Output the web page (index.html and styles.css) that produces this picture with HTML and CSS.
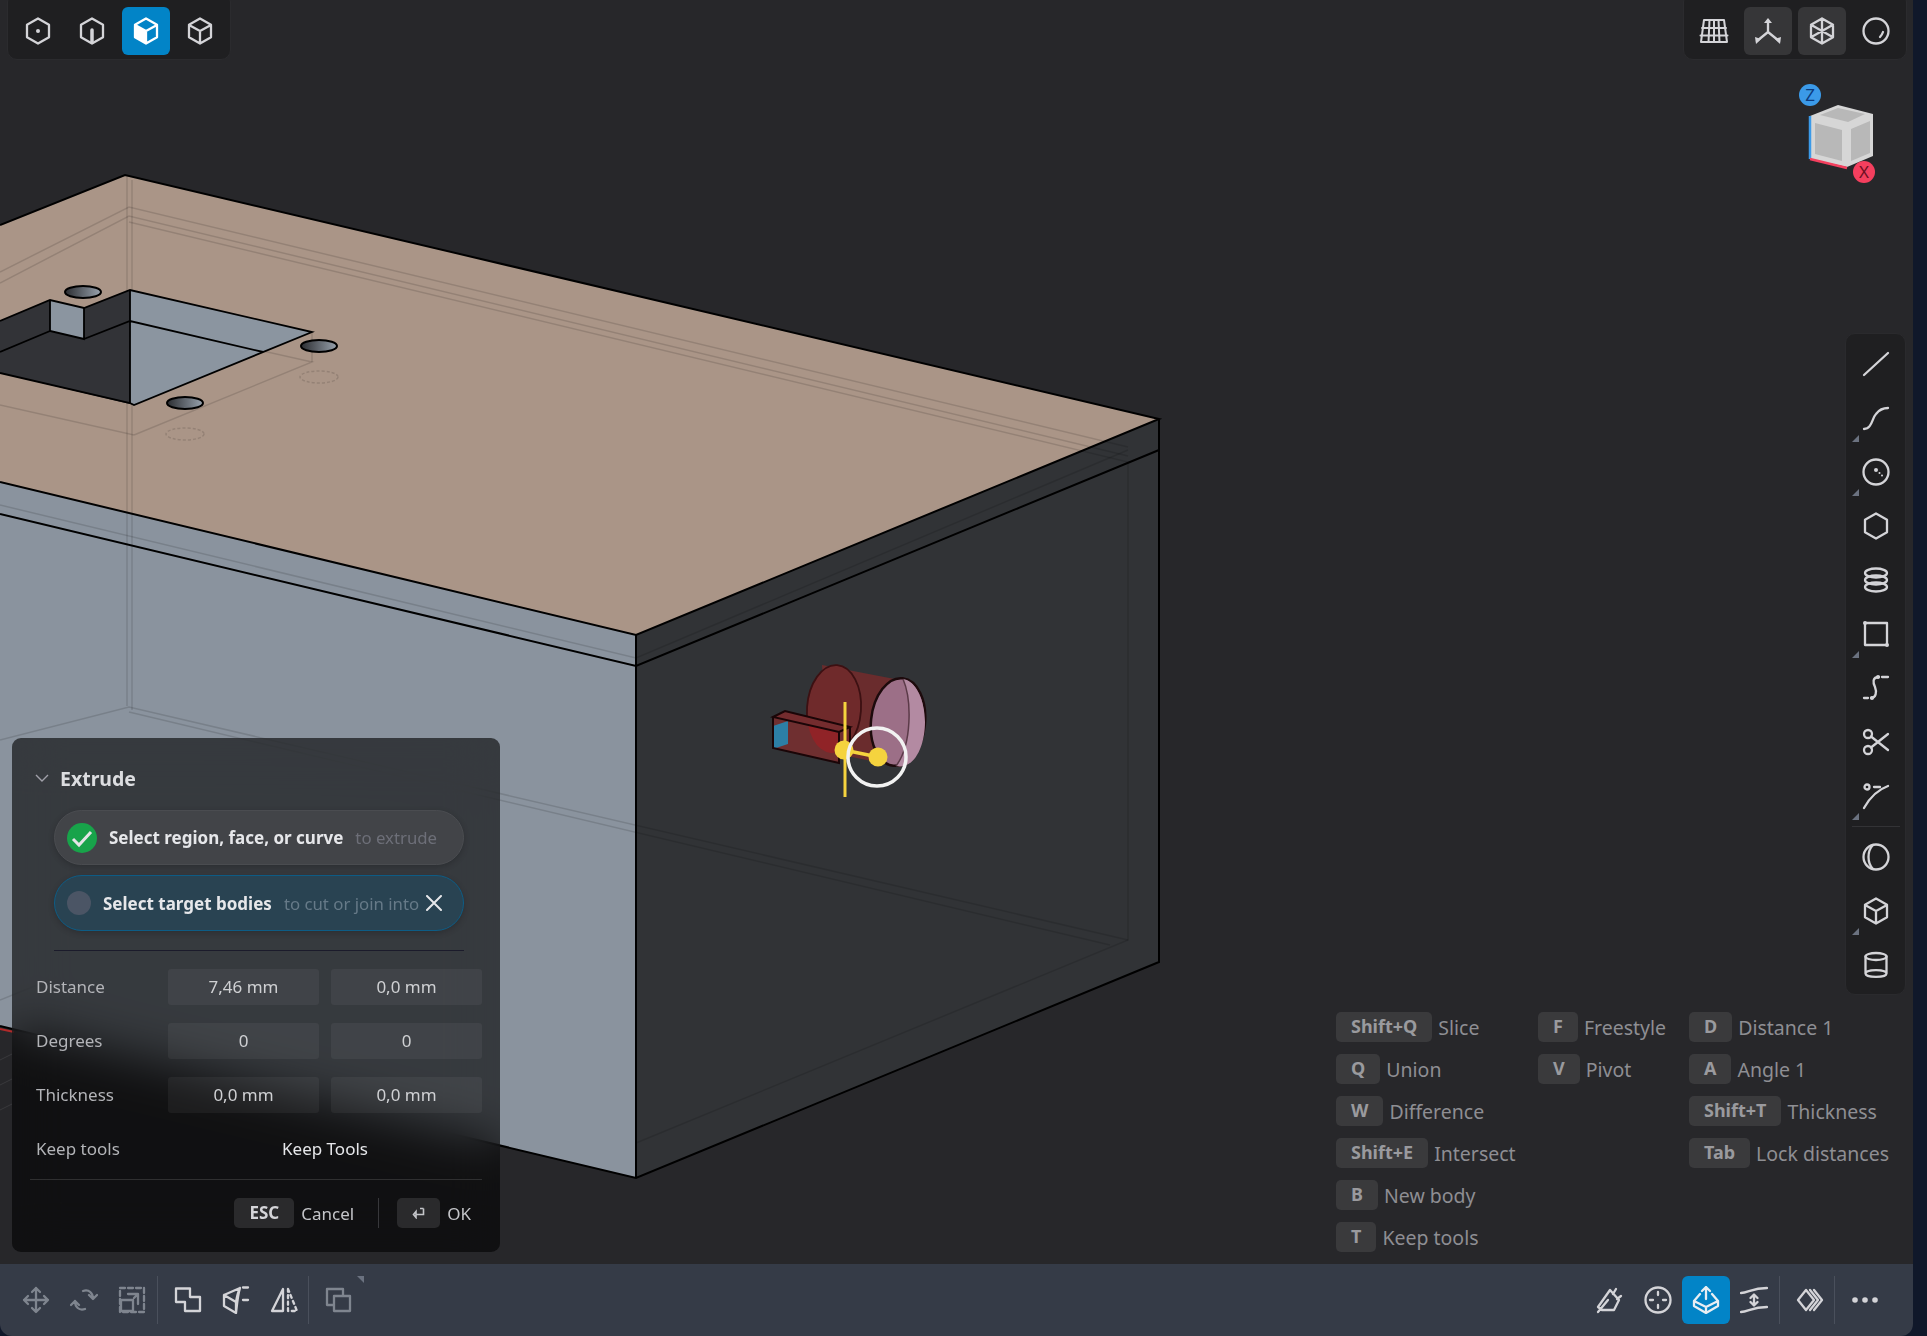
FILE: index.html
```html
<!DOCTYPE html>
<html lang="en">
<head>
    <meta charset="UTF-8">
    <title>Extrude</title>
    <link rel="stylesheet" href="styles.css">
</head>
<body>
<div class="app">
    <div class="viewport">
        <svg class="scene" viewBox="0 0 1913 1264">
            <defs>
                <linearGradient id="holeFill" x1="0" x2="1" y1="0" y2="0">
                    <stop offset="0" stop-color="#2b2d31"/>
                    <stop offset="1" stop-color="#98a2ad"/>
                </linearGradient>
                <clipPath id="overlap">
                    <ellipse cx="834" cy="709" rx="27" ry="44" transform="rotate(4 834 709)"/>
                </clipPath>
            </defs>
            <!-- box faces -->
            <polygon points="0,482 636,635 636,1178 0,1026" fill="#8a939e"/>
            <polygon points="636,635 1159,419 1159,962 636,1178" fill="#313336"/>
            <polygon points="125,175 1159,419 636,635 0,482 0,225" fill="#aa9587"/>
            <!-- hidden lines -->
            <g class="faint">
                <path d="M0 272 L129 207 L1128 447"/>
                <path d="M0 283 L129 216 L1128 456"/>
                <path d="M129 222 L1128 462 L1128 940 L636 1143"/>
                <path d="M127 176 V706 M132 180 V710"/>
                <path d="M0 740 L129 707 L1128 940"/>
                <path d="M129 712 L1110 945"/>
                <path d="M0 505 L636 658 L1128 450"/>
                <path d="M0 1000 L129 948"/>
                <path d="M134 435 L312 362 L130 321"/>
                <path d="M0 405 L134 435"/>
                <path d="M312 332 V362"/>
                <ellipse cx="83" cy="322" rx="19" ry="6" stroke-dasharray="3 2"/>
                <ellipse cx="319" cy="377" rx="19" ry="6" stroke-dasharray="3 2"/>
                <ellipse cx="185" cy="434" rx="19" ry="6" stroke-dasharray="3 2"/>
            </g>
            <!-- cutout -->
            <polygon points="0,321 50,300 50,331 84,339 84,308 130,290 130,403 134,405 0,373" fill="#323337"/>
            <polygon points="130,290 312,332 134,405 130,403" fill="#8b95a0"/>
            <polygon points="50,300 84,308 84,339 50,331" fill="#8b95a0"/>
            <g class="edge thin">
                <path d="M0 321 L50 300 L84 308 L130 290 L312 332 L134 405 L130 403 L0 373"/>
                <path d="M50 300 V331 L84 339 V308 M0 352 L50 331 M84 339 L130 321 L263 352 M130 290 V403"/>
            </g>
            <g stroke="#000" stroke-width="2" fill="url(#holeFill)">
                <ellipse cx="83" cy="292" rx="18" ry="6"/>
                <ellipse cx="319" cy="346" rx="18" ry="6"/>
                <ellipse cx="185" cy="403" rx="18" ry="6"/>
            </g>
            <!-- box edges -->
            <g class="edge">
                <path d="M0 225 L125 175 L1159 419 L636 635 L0 482"/>
                <path d="M0 514 L636 666 L1159 450"/>
                <path d="M636 635 V1178 M1159 419 V962 L636 1178 L0 1026"/>
            </g>
            <path d="M0 1029 L14 1032" stroke="#b02a2a" stroke-width="2"/>
            <g stroke="#3a3a3d" stroke-width="1"><path d="M0 1060 L12 1054 M0 1085 L12 1079 M0 1110 L12 1104"/></g>
            <!-- selected cylinder + gizmo -->
            <g>
                <path d="M822 665 L905 681 A27 44 6 0 1 900 767 L828 752 Z" fill="#6a2c2d"/>
                <ellipse cx="834" cy="709" rx="27" ry="44" transform="rotate(4 834 709)" fill="#6f2a2b" stroke="#3c1012" stroke-width="1.8"/>
                <ellipse cx="898" cy="722" rx="27" ry="44" transform="rotate(6 898 722)" fill="#9c6f87" stroke="#1d0a0c" stroke-width="2.5"/>
                <path d="M903 679 C912 700 912 745 896 766 C915 770 925 745 925 722 C925 700 915 680 903 679 Z" fill="#b38aa2"/>
                <path d="M903 679 C912 700 912 745 896 766" fill="none" stroke="#5b3a48" stroke-width="1.5"/>
                <polygon points="773,717 785,711 850,727 839,763 773,748" fill="#6f2f30"/>
                <polygon points="773,717 785,711 850,727 839,733" fill="#742c2e"/>
                <polygon points="800,722 839,733 839,763 800,753" fill="#902327" clip-path="url(#overlap)"/>
                <polygon points="773,726 788,721 788,744 773,749" fill="#2d7fa6"/>
                <path d="M773 717 L785 711 L850 727 L839 732 Z M773 717 V748 L839 763 V732 M850 727 V750" fill="none" stroke="#1a0507" stroke-width="2"/>
                <path d="M845 702 V797" stroke="#f5d33e" stroke-width="3"/>
                <path d="M844 750 L878 757" stroke="#f5d33e" stroke-width="3.5"/>
                <circle cx="844" cy="750" r="9.5" fill="#f5d33e"/>
                <circle cx="878" cy="757" r="9.5" fill="#f5d33e"/>
                <circle cx="877" cy="757" r="29" fill="none" stroke="#f2f2f2" stroke-width="3.5"/>
            </g>
        </svg>

        <div class="toolbar tb-left">
            <div class="tool"><svg class="ico" viewBox="0 0 28 28"><path d="M14 1.5 L25 7.7 V20.3 L14 26.5 L3 20.3 V7.7 Z"/><circle class="solid" cx="14" cy="14" r="2"/></svg></div>
            <div class="tool"><svg class="ico" viewBox="0 0 28 28"><path d="M14 1.5 L25 7.7 V20.3 L14 26.5 L3 20.3 V7.7 Z"/><path class="fat" d="M14 13 V25"/></svg></div>
            <div class="tool on"><svg class="ico" viewBox="0 0 28 28"><path class="white" d="M3 8 L14 14 V26.5 L3 20.3 Z"/><path d="M14 1.5 L25 7.7 V20.3 L14 26.5 L3 20.3 V7.7 Z M3 8 L14 14 L25 8 M14 14 V26"/></svg></div>
            <div class="tool"><svg class="ico" viewBox="0 0 28 28"><path d="M14 1.5 L25 7.7 V20.3 L14 26.5 L3 20.3 V7.7 Z M3 8 L14 14 L25 8 M14 14 V26"/></svg></div>
        </div>

        <div class="toolbar tb-right">
            <div class="tool"><svg class="ico wide" viewBox="0 0 30 28"><path class="grid" d="M5 3 H25 L28 25 H2 Z M1.5 18.5 H28.5 M3 11 H27 M10.5 3 L9.5 25 M15 3 V25 M19.5 3 L20.5 25"/></svg></div>
            <div class="tool act"><svg class="ico" viewBox="0 0 28 28"><path d="M14 4 V15 M14 15 L3 24 M14 15 L25 24"/><path class="solid" d="M14 1 L18 6 H10 Z M1 20 L7 22 L2 27 Z M27 20 L21 22 L26 27 Z"/></svg></div>
            <div class="tool act"><svg class="ico" viewBox="0 0 28 28"><path d="M14 1.5 L25 7.7 V20.3 L14 26.5 L3 20.3 V7.7 Z M3 7.7 L25 20.3 M25 7.7 L3 20.3 M14 1.5 V26.5"/></svg></div>
            <div class="tool"><svg class="ico" viewBox="0 0 28 28"><circle cx="14" cy="14" r="12.5"/><path d="M21 15 Q20 18 18 20"/></svg></div>
        </div>

        <svg class="navcube" viewBox="0 0 90 90">
            <polygon points="33,13 68,22 68,64 42,75 5,67 5,24" fill="#d6d6d6"/>
            <polygon points="33,16 60,22 43,30 15,23" fill="#b8b8b8"/>
            <polygon points="10,31 37,38 37,69 10,62" fill="#b8b8b8"/>
            <polygon points="46,37 65,29 65,61 46,69" fill="#b8b8b8"/>
            <path d="M5 24 V67" stroke="#3b9ae8" stroke-width="2.5"/>
            <path d="M5 67 L42 76" stroke="#f43f5e" stroke-width="2.5"/>
            <circle cx="5" cy="3" r="11" fill="#3b9ae8"/>
            <text x="5" y="9" class="axis z">Z</text>
            <circle cx="59" cy="80" r="11" fill="#f43f5e"/>
            <text x="59" y="86" class="axis x">X</text>
        </svg>

        <div class="sidebar">
            <div class="side-tool"><svg class="ico" viewBox="0 0 28 28"><path d="M2 25 L26 3"/></svg></div>
            <div class="side-tool more"><svg class="ico" viewBox="0 0 28 28"><path d="M2 25 C10 25 10 14 14 10 C17 6 20 4 26 4"/></svg></div>
            <div class="side-tool more"><svg class="ico" viewBox="0 0 28 28"><circle cx="14" cy="14" r="12.5"/><circle class="solid" cx="14" cy="12" r="2"/><circle class="solid" cx="17.5" cy="15" r="1"/><circle class="solid" cx="20" cy="17.5" r="1"/></svg></div>
            <div class="side-tool"><svg class="ico" viewBox="0 0 28 28"><path d="M14 1.5 L25 7.7 V20.3 L14 26.5 L3 20.3 V7.7 Z"/></svg></div>
            <div class="side-tool"><svg class="ico" viewBox="0 0 28 28"><ellipse cx="14" cy="7" rx="11" ry="4.5"/><ellipse cx="14" cy="14" rx="11" ry="4.5"/><ellipse cx="14" cy="21" rx="11" ry="4.5"/></svg></div>
            <div class="side-tool more"><svg class="ico" viewBox="0 0 28 28"><path d="M3 3 H25 V25 H3 Z"/><circle class="solid" cx="3" cy="3" r="2"/><circle class="solid" cx="25" cy="25" r="2"/></svg></div>
            <div class="side-tool"><svg class="ico" viewBox="0 0 28 28"><path d="M17 3 C10 3 11 9 13 13 C15 18 14 24 9 24"/><path d="M20 3 H26 M2 24 H6"/><circle class="solid" cx="16" cy="3" r="2"/><circle class="solid" cx="10" cy="24" r="2"/></svg></div>
            <div class="side-tool"><svg class="ico" viewBox="0 0 28 28"><circle cx="6" cy="6" r="4"/><circle cx="6" cy="22" r="4"/><path d="M9 8.5 L26 22 M9 19.5 L26 6"/></svg></div>
            <div class="side-tool more"><svg class="ico" viewBox="0 0 28 28"><circle cx="5" cy="5" r="2.5"/><path d="M2 26 C7 17 15 8 26 4 M12 5 H18"/></svg></div>
            <div class="side-sep"></div>
            <div class="side-tool"><svg class="ico" viewBox="0 0 28 28"><circle cx="14" cy="14" r="12.5"/><path d="M11 2 C5 8 5 20 11 26"/></svg></div>
            <div class="side-tool more"><svg class="ico" viewBox="0 0 28 28"><path d="M14 1.5 L25 7.7 V20.3 L14 26.5 L3 20.3 V7.7 Z M3 8 L14 14 L25 8 M14 14 V26"/></svg></div>
            <div class="side-tool"><svg class="ico" viewBox="0 0 28 28"><ellipse cx="14" cy="5.5" rx="10.5" ry="3.5"/><path d="M3.5 5.5 V22.5 C3.5 27 24.5 27 24.5 22.5 V5.5 M3.5 22.5 C3.5 18 24.5 18 24.5 22.5"/></svg></div>
        </div>

        <div class="panel">
            <div class="panel-title">
                <svg class="chev" viewBox="0 0 14 8"><path d="M1 1 L7 7 L13 1"/></svg>
                <span>Extrude</span>
            </div>
            <div class="pill done">
                <span class="check"><svg viewBox="0 0 30 30"><path d="M6 16 L12 22 L24 9"/></svg></span>
                <b>Select region, face, or curve</b>
                <span class="hint">to extrude</span>
            </div>
            <div class="pill active">
                <span class="dot"></span>
                <b>Select target bodies</b>
                <span class="hint">to cut or join into</span>
                <svg class="close" viewBox="0 0 16 16"><path d="M1 1 L15 15 M15 1 L1 15"/></svg>
            </div>
            <div class="rule dark"></div>
            <div class="fields">
                <label>Distance</label><div class="field">7,46 mm</div><div class="field">0,0 mm</div>
                <label>Degrees</label><div class="field">0</div><div class="field">0</div>
                <label>Thickness</label><div class="field">0,0 mm</div><div class="field">0,0 mm</div>
                <label>Keep tools</label><div class="keep">Keep Tools</div>
            </div>
            <div class="rule"></div>
            <div class="panel-foot">
                <kbd class="key">ESC</kbd><span>Cancel</span>
                <i class="foot-sep"></i>
                <kbd class="key enter"><svg viewBox="0 0 14 12"><path d="M11.5 1.5 V7.5 H4 M4 4.5 L1.5 7.5 L4 10.5 Z M8 1.5 H11.5"/></svg></kbd><span>OK</span>
            </div>
        </div>

        <div class="hints">
            <div class="hint-col first">
                <div class="hint-row"><kbd>Shift+Q</kbd>Slice</div>
                <div class="hint-row"><kbd>Q</kbd>Union</div>
                <div class="hint-row"><kbd>W</kbd>Difference</div>
                <div class="hint-row"><kbd>Shift+E</kbd>Intersect</div>
                <div class="hint-row"><kbd>B</kbd>New body</div>
                <div class="hint-row"><kbd>T</kbd>Keep tools</div>
            </div>
            <div class="hint-col second">
                <div class="hint-row"><kbd>F</kbd>Freestyle</div>
                <div class="hint-row"><kbd>V</kbd>Pivot</div>
            </div>
            <div class="hint-col">
                <div class="hint-row"><kbd>D</kbd>Distance 1</div>
                <div class="hint-row"><kbd>A</kbd>Angle 1</div>
                <div class="hint-row"><kbd>Shift+T</kbd>Thickness</div>
                <div class="hint-row"><kbd>Tab</kbd>Lock distances</div>
            </div>
        </div>
    </div>

    <div class="bottombar">
        <div class="bar-tool dim"><svg class="ico" viewBox="0 0 28 28"><path d="M14 2 V26 M2 14 H26 M10 6 L14 2 L18 6 M10 22 L14 26 L18 22 M6 10 L2 14 L6 18 M22 10 L26 14 L22 18"/></svg></div>
        <div class="bar-tool dim"><svg class="ico" viewBox="0 0 28 28"><path d="M13 5 C19 3 23 7 23 13 M19 9 L23 13 L27 9 M15 23 C9 25 5 21 5 15 M9 19 L5 15 L1 19"/></svg></div>
        <div class="bar-tool dim"><svg class="ico" viewBox="0 0 28 28"><path stroke-dasharray="5 3" d="M2 2 H26 V26 H2 Z"/><path d="M3 14 H15 V25 H3 Z M10 8 H20 V18 M16 12 L20 8"/></svg></div>
        <div class="bar-sep s1"></div>
        <div class="bar-tool"><svg class="ico" viewBox="0 0 28 28"><path d="M2 2.5 H16 V11 H26 V25 H11 V16 H2 Z"/></svg></div>
        <div class="bar-tool"><svg class="ico" viewBox="0 0 28 28"><path d="M2 9 L18 2 C16 8 15 18 14 27 L2 20 Z M2 9 L14 16 M14 16 C15 10 16 6 18 2 M14 16 V27"/><path d="M21 1.5 H26 M21 14 H26"/></svg></div>
        <div class="bar-tool"><svg class="ico" viewBox="0 0 28 28"><path d="M13 3 V25 H2 Z"/><path stroke-dasharray="3 3.5" d="M18 3 L27 25 H18 Z"/></svg></div>
        <div class="bar-sep s2"></div>
        <div class="bar-tool dim copy"><svg class="ico" viewBox="0 0 28 28"><path d="M9 19 H2 V3 H18 V10 M9 10 H25 V25 H9 Z"/></svg></div>

        <div class="bar-tool push"><svg class="ico" viewBox="0 0 28 28"><path d="M2 21 L14 4 L23 14 L18 24 L6 24 Z M2 26 L12 14 M20 3 L17 8 M25 10 L21 13"/></svg></div>
        <div class="bar-tool"><svg class="ico" viewBox="0 0 28 28"><circle cx="14" cy="14" r="12.5"/><path d="M14 6 V9 M14 19 V22 M6 14 H9 M19 14 H22"/></svg></div>
        <div class="bar-tool on"><svg class="ico" viewBox="0 0 28 28"><path d="M14 1 V13 M10 5 L14 1 L18 5 M8 8 L2 15 L14 21 L26 15 L20 8 M2 15 V20 L14 27 L26 20 V15 M14 21 V27"/></svg></div>
        <div class="bar-tool"><svg class="ico" viewBox="0 0 28 28"><path d="M1 7 C8 7 12 2 27 2 M1 26 C8 26 12 21 27 21 M14 9 V19 M10.5 12 L14 8.5 L17.5 12 M10.5 16 L14 19.5 L17.5 16"/></svg></div>
        <div class="bar-sep s3"></div>
        <div class="bar-tool"><svg class="ico" viewBox="0 0 28 28"><path d="M10 4 L18 14 L10 24 L2 14 Z M18 4 L26 14 L18 24 M14 4 L22 14 L14 24"/></svg></div>
        <div class="bar-sep s4"></div>
        <div class="bar-tool"><svg class="ico" viewBox="0 0 28 28"><circle class="solid" cx="4" cy="14" r="2.8"/><circle class="solid" cx="14" cy="14" r="2.8"/><circle class="solid" cx="24" cy="14" r="2.8"/></svg></div>
    </div>
</div>
<div class="strip"></div>
</body>
</html>
```

FILE: styles.css
```css
* { box-sizing: border-box; }

html, body { margin: 0; height: 100%; }

body {
    display: flex;
    width: 1927px;
    height: 1336px;
    overflow: hidden;
    font-family: "Noto Sans", sans-serif;
    background: #10182a;
}

.app {
    width: 1913px;
    display: flex;
    flex-direction: column;
}

.strip { flex: 1; background: #10182a; }

.viewport {
    position: relative;
    height: 1264px;
    background: #27272a;
    overflow: hidden;
}

.scene { position: absolute; left: 0; top: 0; width: 1913px; height: 1264px; }

.faint path, .faint ellipse { fill: none; stroke: rgba(0,0,0,0.13); stroke-width: 1.5; }
.edge path { fill: none; stroke: #000; stroke-width: 2; }
.edge.thin path { stroke-width: 1.8; }

/* icons */
.ico {
    width: 28px;
    height: 28px;
    fill: none;
    stroke: #d4d4d8;
    stroke-width: 2.3;
    stroke-linecap: round;
    stroke-linejoin: round;
}
.ico.wide { width: 30px; }
.ico .solid { fill: #d4d4d8; stroke: none; }
.ico .fat { stroke-width: 3.5; }
.ico .white { fill: #fff; stroke: none; }
.ico .grid { stroke-width: 2; }

/* top toolbars */
.toolbar {
    position: absolute;
    top: -8px;
    height: 68px;
    padding: 14px 6px 6px;
    display: flex;
    gap: 6px;
    background: #1f1f21;
    border: 1px solid #2b2b2e;
    border-radius: 10px;
}
.tb-left { left: 7px; }
.tb-right { left: 1683px; }

.tool {
    width: 48px;
    height: 48px;
    display: flex;
    align-items: center;
    justify-content: center;
    border-radius: 6px;
}
.tool.on { background: #0284c7; }
.tool.on .ico { stroke: #fff; }
.tool.act { background: #363638; }

/* nav cube */
.navcube {
    position: absolute;
    left: 1805px;
    top: 92px;
    width: 90px;
    height: 90px;
    overflow: visible;
}
.axis { font-size: 17px; text-anchor: middle; font-family: "Noto Sans", sans-serif; }
.axis.z { fill: #0c3a7d; }
.axis.x { fill: #6e0f22; }

/* right column */
.sidebar {
    position: absolute;
    left: 1845px;
    top: 333px;
    width: 61px;
    height: 662px;
    padding: 3px 0;
    background: #1f1f21;
    border: 1px solid #2a2a2d;
    border-radius: 10px;
    display: flex;
    flex-direction: column;
    align-items: center;
}
.side-tool {
    position: relative;
    width: 48px;
    height: 54px;
    flex: none;
    display: flex;
    align-items: center;
    justify-content: center;
}
.side-tool.more::after {
    content: "";
    position: absolute;
    left: 0;
    bottom: 3px;
    border-style: solid;
    border-width: 0 0 7px 7px;
    border-color: transparent transparent #6b7280 transparent;
}
.side-sep { width: 48px; height: 1px; margin: 3px 0; flex: none; background: #333336; }

/* extrude panel */
.panel {
    position: absolute;
    left: 12px;
    top: 738px;
    width: 488px;
    height: 514px;
    padding: 28px 18px 0 18px;
    background: rgba(4,4,4,0.62);
    -webkit-backdrop-filter: blur(24px);
    backdrop-filter: blur(24px);
    border-radius: 9px;
    color: #d4d4d8;
}
.panel-title {
    height: 24px;
    display: flex;
    align-items: center;
    font-size: 19.5px;
    font-weight: 700;
    color: #dcdde0;
}
.chev { width: 14px; height: 8px; margin: 0 11px 0 5px; fill: none; stroke: #a1a1aa; stroke-width: 1.4; }

.pill {
    width: 410px;
    margin-left: 24px;
    display: flex;
    align-items: center;
    border-radius: 28px;
    font-size: 17px;
    color: #e6e7ea;
}
.pill b { font-weight: 700; }
.pill .hint { font-weight: 400; font-size: 16.8px; }
.pill.done {
    height: 55px;
    margin-top: 20px;
    padding-left: 12px;
    background: #424448;
    border: 1px solid #4a4c50;
    box-shadow: 0 2px 6px rgba(0,0,0,0.2);
}
.pill.done .hint { margin-left: 12px; color: #6d6f78; }
.pill.active {
    height: 56px;
    margin-top: 10px;
    padding-left: 12px;
    background: #294352;
    border: 1px solid #0d5c85;
    box-shadow: 0 2px 6px rgba(0,0,0,0.2);
}
.pill.active .hint { margin-left: 12px; color: #667a88; }

.check {
    width: 30px;
    height: 30px;
    margin-right: 12px;
    border-radius: 50%;
    background: #18a34a;
    flex: none;
}
.check svg { display: block; fill: none; stroke: #e4e4e7; stroke-width: 3; }
.dot {
    width: 24px;
    height: 24px;
    margin-right: 12px;
    border-radius: 50%;
    background: #4b5565;
    flex: none;
}
.close { width: 16px; height: 16px; margin-left: 7px; fill: none; stroke: #e6e7ea; stroke-width: 2; stroke-linecap: round; }

.rule { width: 452px; height: 1px; background: rgba(255,255,255,0.13); }
.rule.dark { width: 410px; margin: 19px 0 18px 24px; background: #1b1b2b; }

.fields {
    display: grid;
    grid-template-columns: 120px 151px 151px;
    column-gap: 12px;
    row-gap: 18px;
    margin-left: 6px;
    margin-bottom: 12px;
    align-items: center;
    font-size: 17px;
}
.fields label { height: 36px; line-height: 36px; color: #b3b4b8; }
.field {
    height: 36px;
    line-height: 36px;
    text-align: center;
    border-radius: 3px;
    background: rgba(255,255,255,0.05);
    color: #cfd0d3;
}
.keep { grid-column: 2 / 4; height: 36px; line-height: 36px; text-align: center; color: #e6e7ea; }

.panel-foot {
    display: flex;
    align-items: center;
    justify-content: flex-end;
    margin-top: 18px;
    padding-right: 11px;
    font-size: 17px;
    color: #c4c5c9;
}
.key {
    height: 30px;
    line-height: 30px;
    padding: 0 15px;
    margin-right: 7px;
    border-radius: 5px;
    background: #2a2a2c;
    font-family: inherit;
    font-size: 17px;
    font-weight: 700;
    color: #d4d4d8;
}
.key.enter { width: 43px; padding: 0; margin-right: 7px; display: flex; align-items: center; justify-content: center; }
.key.enter svg { width: 14px; height: 12px; fill: none; stroke: #c4c5c9; stroke-width: 1.6; }
.foot-sep { width: 1px; height: 30px; margin: 0 18px 0 24px; background: #38383b; }

/* key hints */
.hints {
    position: absolute;
    left: 1336px;
    top: 1012px;
    display: flex;
    font-size: 19.5px;
    color: #8e8e93;
}
.hint-col { display: flex; flex-direction: column; gap: 12px; }
.hint-col.first { width: 202px; }
.hint-col.second { width: 151px; }
.hint-row { display: flex; align-items: center; height: 30px; white-space: nowrap; }
.hint-row kbd {
    height: 30px;
    line-height: 29px;
    padding: 0 15px;
    margin-right: 6px;
    border-radius: 5px;
    background: #3a3a3c;
    font-family: inherit;
    font-size: 18px;
    font-weight: 700;
    color: #9a9a9e;
}

/* bottom bar */
.bottombar {
    position: relative;
    height: 72px;
    padding: 12px 0 0 12px;
    display: flex;
    background: #353b47;
    border-radius: 0 0 12px 12px;
}
.bar-tool {
    position: relative;
    width: 48px;
    height: 48px;
    flex: none;
    display: flex;
    align-items: center;
    justify-content: center;
    border-radius: 6px;
}
.bar-tool.dim .ico { stroke: #7f858f; }
.bar-tool.on { background: #0284c7; }
.bar-tool.on .ico { stroke: #e8eef3; }
.bar-tool.push { margin-left: auto; }
.bar-tool.copy::after {
    content: "";
    position: absolute;
    right: -1px;
    top: 0;
    border-style: solid;
    border-width: 0 7px 7px 0;
    border-color: transparent #6b7280 transparent transparent;
}
.bar-sep { width: 1px; height: 48px; margin: 0 6px; flex: none; background: #4a505c; }
.bar-sep.s1 { margin: 0 6px 0 1px; }
.bar-sep.s2 { margin: 0 6px 0 0; }
.bar-sep.s3 { margin: 0 6px 0 1px; }
.bar-sep.s4 { margin: 0 6px 0 0; }
.bar-tool:last-child { margin-right: 24px; }
```
